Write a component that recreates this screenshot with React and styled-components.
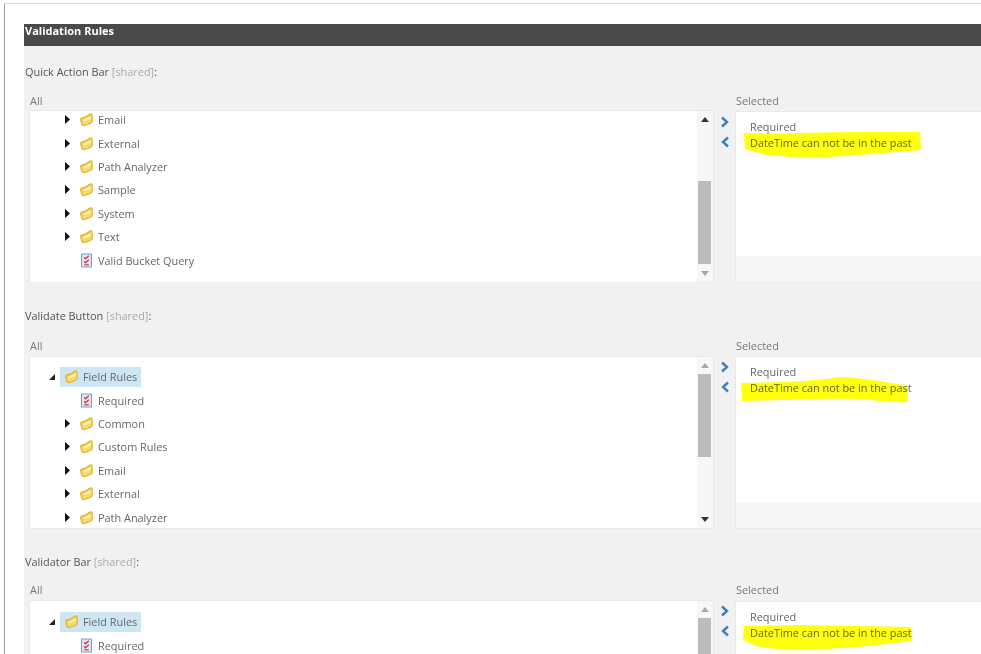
import React from 'react';
import styled, { createGlobalStyle } from 'styled-components';

const GlobalStyle = createGlobalStyle`
  html, body {
    margin: 0;
    height: 100%;
    overflow: hidden;
    background: #fff;
  }
  body {
    font-family: "Open Sans", "Liberation Sans", sans-serif;
    font-size: 10.9px;
    color: #666;
  }
`
const Page = styled.div`
  box-sizing: border-box;
  width: 981px;
  height: 654px;
  margin: 3px 0 0 4px;
  padding: 20px 0 0 19px;
  border-top: 1px solid #dcdcdc;
  border-left: 1px solid #9a9a9a;
  overflow: hidden;
  filter: blur(0.4px);
`
const Header = styled.div`
  height: 22px;
  padding: 0 0 0 1px;
  background: #4a4a4a;
  color: #fff;
  font-weight: 700;
  font-size: 11px;
  line-height: 13px;
`
const Panel = styled.div`
  background: #f1f1f1;
  padding-left: 1px;
  min-height: 700px;
`
const Section = styled.section`
  padding-top: ${props => props.$top}px;
`
const Title = styled.div`
  height: 16px;
  line-height: 16px;
  color: #555;
  margin-bottom: ${props => props.$gap}px;
`
const Shared = styled.span`
  color: #aaa;
`
const Columns = styled.div`
  display: grid;
  grid-template-columns: 683px 23px 260px;
  margin-left: 5px;
`
const ColumnLabel = styled.div`
  height: ${props => props.$height}px;
  line-height: 14px;
  color: #777;
`
const Box = styled.div`
  height: 171px;
  background: #fff;
  box-shadow: 0 0 1px #c4c4c4;
`
const ListBox = styled(Box)`
  display: flex;
  overflow: hidden;
`
const Tree = styled.div`
  flex: 1;
  margin-top: ${props => props.$top}px;
`
const Row = styled.div`
  display: flex;
  align-items: center;
  height: 23.4px;
  margin-left: ${props => 19 + props.$depth * 15}px;
`
const Toggle = styled.span`
  display: flex;
  align-items: center;
  width: 11px;
  flex: none;
`
const Node = styled.span`
  display: inline-flex;
  align-items: center;
  gap: 4px;
  height: 20px;
  padding: 0 4px;
  background: ${props => (props.$active ? '#cde6f4' : 'transparent')};
  color: #666;
`
const Scrollbar = styled.div`
  display: flex;
  flex-direction: column;
  align-items: center;
  width: 16px;
  flex: none;
  background: #f7f7f7;
`
const ScrollArrow = styled.span`
  flex: none;
  height: 17px;
  display: flex;
  align-items: center;
  color: ${props => (props.$dim ? '#a8a8a8' : '#333')};
`
const Track = styled.div`
  flex: 1;
  align-self: stretch;
`
const Thumb = styled.div`
  width: 13px;
  height: 83px;
  margin: ${props => props.$offset}px 0 0 1px;
  background: #bcbcbc;
`
const Transfer = styled.div`
  display: flex;
  flex-direction: column;
  gap: 8px;
  padding: 22px 0 0 7px;
`
const SelectedBox = styled(Box)`
  position: relative;
  display: flex;
  flex-direction: column;
  margin-top: ${props => props.$top}px;
  height: ${props => 171 - props.$top}px;
`
const SelectedList = styled.div`
  flex: 1;
  padding: 7px 0 0 14px;
  line-height: 16px;
  color: #666;
`
const SelectedFooter = styled.div`
  height: 26px;
  background: #f7f7f7;
`
const Highlight = styled.svg`
  position: absolute;
  left: 0;
  top: 0;
  mix-blend-mode: multiply;
  pointer-events: none;
`

const Arrow = ({ open }) => (
  <svg width="7" height="9" viewBox="0 0 7 9">
    {open
      ? <path d="M6 2v6H0z" fill="#222" />
      : <path d="M1 0l5 4.5L1 9z" fill="#111" />}
  </svg>
)

const FolderIcon = () => (
  <svg width="15" height="15" viewBox="0 0 15 15">
    <path d="M1 7.5 Q1 6 2.4 5.6 L6 4.4 L10.8 1.4 Q13.2 0.6 13.6 2.6 L14 8.6 Q14 10.8 12 11.8 L6 14 Q3.2 14.6 2.2 12.4 Z" fill="#e2b637" />
    <path d="M2.4 7.6 L6.4 6 L12.4 2.4 L12.8 8.4 Q12.8 10 11.4 10.8 L5.8 12.8 Q4 13.2 3.4 11.6 Z" fill="#f4da6c" />
    <path d="M4.4 7.8 L7 6.8 L11.4 4.2 L11.6 6.8 L5.2 9.6 Z" fill="#fdf0ae" />
  </svg>
)

const RuleIcon = () => (
  <svg width="15" height="15" viewBox="0 0 15 15">
    <rect x="2.5" y="1" width="10" height="13" rx="0.5" fill="#dce8f6" stroke="#6fa0d6" strokeWidth="1.1" />
    <path d="M5.2 4.2l1.4 1.5L9.8 2.8M5.2 8.2l1.4 1.5L9.8 6.8" fill="none" stroke="#cf3f4a" strokeWidth="1.5" />
    <path d="M5.2 11.8h4.6" stroke="#cf3f4a" strokeWidth="1.2" />
  </svg>
)

const ChevronButton = ({ left }) => (
  <svg width="10" height="12" viewBox="0 0 10 12">
    <path d={left ? 'M8 1.5L3 6l5 4.5' : 'M2 1.5L7 6l-5 4.5'} fill="none" stroke="#3f7fb8" strokeWidth="2.4" />
  </svg>
)

const TriangleUp = () => (
  <svg width="8" height="5" viewBox="0 0 8 5"><path d="M4 0l4 5H0z" fill="currentColor" /></svg>
)
const TriangleDown = () => (
  <svg width="8" height="5" viewBox="0 0 8 5"><path d="M0 0h8L4 5z" fill="currentColor" /></svg>
)

const scrolledTree = [
  { label: 'Email', depth: 1, folder: true },
  { label: 'External', depth: 1, folder: true },
  { label: 'Path Analyzer', depth: 1, folder: true },
  { label: 'Sample', depth: 1, folder: true },
  { label: 'System', depth: 1, folder: true },
  { label: 'Text', depth: 1, folder: true },
  { label: 'Valid Bucket Query', depth: 1 },
]

const fullTree = [
  { label: 'Field Rules', depth: 0, folder: true, open: true },
  { label: 'Required', depth: 1 },
  { label: 'Common', depth: 1, folder: true },
  { label: 'Custom Rules', depth: 1, folder: true },
  { label: 'Email', depth: 1, folder: true },
  { label: 'External', depth: 1, folder: true },
  { label: 'Path Analyzer', depth: 1, folder: true },
]

const sections = [
  {
    title: 'Quick Action Bar', top: 18, gap: 14, labelHeight: 17, selectedTop: 1,
    tree: scrolledTree, treeTop: -3, thumb: 53, upDim: false, downDim: true,
    mark: 'M8 21 Q30 22 60 21 L120 20 L184 20 L185 38 Q150 41 110 44 Q70 47 30 43 L9 37 Z',
  },
  {
    title: 'Validate Button', top: 26, gap: 15, labelHeight: 18, selectedTop: 0,
    tree: fullTree, treeTop: 8, thumb: 0, upDim: true, downDim: false,
    mark: 'M5 26 L50 25 Q85 23 105 20 Q130 21 172 29 L172 45 Q150 46 130 42 Q90 41 50 43 L6 44 Z',
  },
  {
    title: 'Validator Bar', top: 26, gap: 13, labelHeight: 18, selectedTop: 1,
    tree: fullTree.slice(0, 2), treeTop: 9, thumb: 0, upDim: true, downDim: false,
    mark: 'M8 24 L60 23 L175 25 L176 39 Q130 45 90 47 Q50 50 20 44 L7 38 Z',
  },
]

const TreeRow = ({ item }) => (
  <Row $depth={item.depth}>
    <Toggle>{item.folder && <Arrow open={item.open} />}</Toggle>
    <Node $active={item.open}>
      {item.folder ? <FolderIcon /> : <RuleIcon />}
      {item.label}
    </Node>
  </Row>
)

const RulesSection = ({ section }) => (
  <Section $top={section.top}>
    <Title $gap={section.gap}>
      {section.title} <Shared>[shared]</Shared>:
    </Title>
    <Columns>
      <div>
        <ColumnLabel $height={section.labelHeight}>All</ColumnLabel>
        <ListBox>
          <Tree $top={section.treeTop}>
            {section.tree.map(item => <TreeRow key={item.label} item={item} />)}
          </Tree>
          <Scrollbar>
            <ScrollArrow $dim={section.upDim}><TriangleUp /></ScrollArrow>
            <Track>
              <Thumb $offset={section.thumb} />
            </Track>
            <ScrollArrow $dim={section.downDim}><TriangleDown /></ScrollArrow>
          </Scrollbar>
        </ListBox>
      </div>
      <Transfer>
        <ChevronButton />
        <ChevronButton left />
      </Transfer>
      <div>
        <ColumnLabel $height={section.labelHeight}>Selected</ColumnLabel>
        <SelectedBox $top={section.selectedTop}>
          <SelectedList>
            <div>Required</div>
            <div>DateTime can not be in the past</div>
          </SelectedList>
          <SelectedFooter />
          <Highlight width="200" height="60" viewBox="0 0 200 60">
            <path d={section.mark} fill="#ffff10" />
          </Highlight>
        </SelectedBox>
      </div>
    </Columns>
  </Section>
)

export default function App() {
  return (
    <>
      <GlobalStyle />
      <Page>
        <Header>Validation Rules</Header>
        <Panel>
          {sections.map(section => <RulesSection key={section.title} section={section} />)}
        </Panel>
      </Page>
    </>
  );
}
